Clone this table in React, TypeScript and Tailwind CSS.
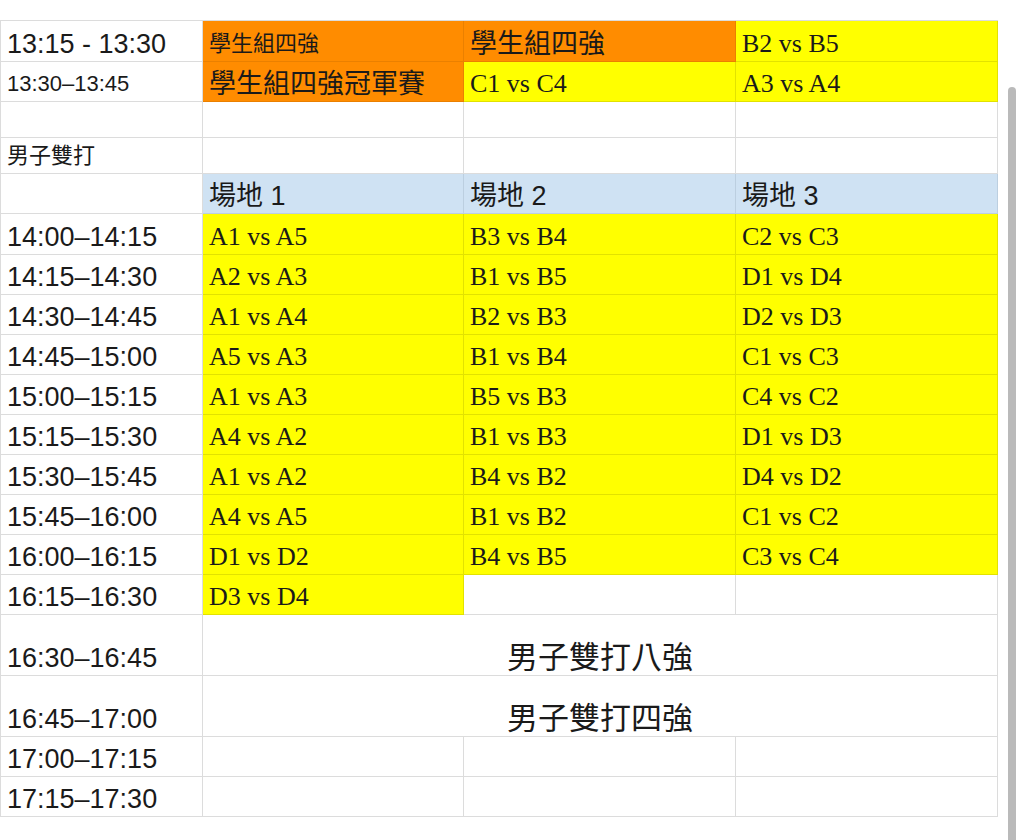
import type { ReactNode } from 'react'

type Tone = 'white' | 'yellow' | 'orange' | 'blue'
type Face = 'sans' | 'serif'

const TONE: Record<Tone, string> = {
  white: 'bg-white border-[#dcdcdc]',
  yellow: 'bg-[#ffff00] border-[#e2e200]',
  orange: 'bg-[#ff8c00] border-[#ea8000]',
  blue: 'bg-[#cfe2f3] border-[#bccfe0]',
}

const FACE: Record<Face, string> = {
  sans: "font-['Liberation_Sans','Noto_Sans_CJK_TC',sans-serif]",
  serif: "font-['Liberation_Serif','Noto_Sans_CJK_TC',serif]",
}

type CellProps = {
  tone?: Tone
  face?: Face
  size?: string
  span?: boolean
  center?: boolean
  children?: ReactNode
}

function Cell({ tone = 'white', face = 'sans', size = 'text-[27px]', span, center, children }: CellProps) {
  return (
    <div
      className={`flex items-end overflow-hidden whitespace-nowrap border-r border-b px-[6px] pb-[2px] leading-[30px] text-[#1a1a1a] ${TONE[tone]} ${FACE[face]} ${size} ${span ? 'col-span-3' : ''} ${center ? 'justify-center' : ''}`}
    >
      {children}
    </div>
  )
}

const MATCHES: [string, string, string, string][] = [
  ['14:00–14:15', 'A1 vs A5', 'B3 vs B4', 'C2 vs C3'],
  ['14:15–14:30', 'A2 vs A3', 'B1 vs B5', 'D1 vs D4'],
  ['14:30–14:45', 'A1 vs A4', 'B2 vs B3', 'D2 vs D3'],
  ['14:45–15:00', 'A5 vs A3', 'B1 vs B4', 'C1 vs C3'],
  ['15:00–15:15', 'A1 vs A3', 'B5 vs B3', 'C4 vs C2'],
  ['15:15–15:30', 'A4 vs A2', 'B1 vs B3', 'D1 vs D3'],
  ['15:30–15:45', 'A1 vs A2', 'B4 vs B2', 'D4 vs D2'],
  ['15:45–16:00', 'A4 vs A5', 'B1 vs B2', 'C1 vs C2'],
  ['16:00–16:15', 'D1 vs D2', 'B4 vs B5', 'C3 vs C4'],
]

export default function App() {
  return (
    <div className="relative h-[840px] w-[1024px] overflow-hidden bg-white pt-[20px]">
      <div className="grid w-[998px] grid-cols-[202px_261px_272px_262px] grid-rows-[41px_40px_36px_36px_40px_41px_repeat(9,40px)_61px_61px_40px_40px] border-t border-l border-[#dcdcdc]">
        {/* 學生組 */}
        <Cell>13:15 - 13:30</Cell>
        <Cell tone="orange" size="text-[22px]">學生組四強</Cell>
        <Cell tone="orange">學生組四強</Cell>
        <Cell tone="yellow" face="serif" size="text-[26px]">B2 vs B5</Cell>

        <Cell size="text-[22px]">13:30–13:45</Cell>
        <Cell tone="orange">學生組四強冠軍賽</Cell>
        <Cell tone="yellow" face="serif" size="text-[26px]">C1 vs C4</Cell>
        <Cell tone="yellow" face="serif" size="text-[26px]">A3 vs A4</Cell>

        <Cell />
        <Cell />
        <Cell />
        <Cell />

        {/* 男子雙打 */}
        <Cell size="text-[22px]">男子雙打</Cell>
        <Cell />
        <Cell />
        <Cell />

        <Cell />
        <Cell tone="blue">場地 1</Cell>
        <Cell tone="blue">場地 2</Cell>
        <Cell tone="blue">場地 3</Cell>

        {MATCHES.map(([time, a, b, c]) => [
          <Cell key={time}>{time}</Cell>,
          <Cell key={time + a} tone="yellow" face="serif" size="text-[26px]">{a}</Cell>,
          <Cell key={time + b} tone="yellow" face="serif" size="text-[26px]">{b}</Cell>,
          <Cell key={time + c} tone="yellow" face="serif" size="text-[26px]">{c}</Cell>,
        ])}

        <Cell>16:15–16:30</Cell>
        <Cell tone="yellow" face="serif" size="text-[26px]">D3 vs D4</Cell>
        <Cell />
        <Cell />

        <Cell>16:30–16:45</Cell>
        <Cell span center size="text-[31px]">男子雙打八強</Cell>

        <Cell>16:45–17:00</Cell>
        <Cell span center size="text-[31px]">男子雙打四強</Cell>

        <Cell>17:00–17:15</Cell>
        <Cell />
        <Cell />
        <Cell />

        <Cell>17:15–17:30</Cell>
        <Cell />
        <Cell />
        <Cell />
      </div>

      {/* overlay scrollbar */}
      <div className="absolute top-[87px] bottom-0 left-[1008px] w-[8px] rounded-t-full bg-[#bababa]" />
    </div>
  )
}
